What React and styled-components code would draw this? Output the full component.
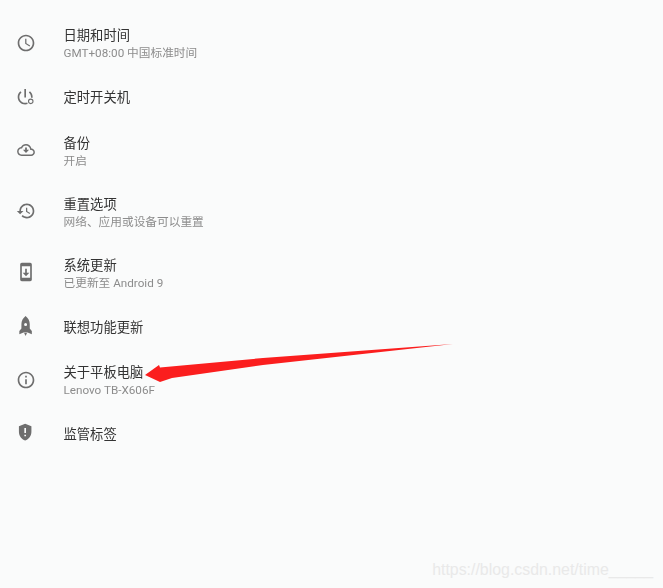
import React from "react";
import styled, { createGlobalStyle } from "styled-components";

const Global = createGlobalStyle`
  html, body {
    margin: 0;
    padding: 0;
    background: #fafbfb;
  }
`;

const icons = {
  clock: {
    paths: [
      "M11.99 2C6.47 2 2 6.48 2 12s4.47 10 9.99 10C17.52 22 22 17.52 22 12S17.52 2 11.99 2zM12 20c-4.42 0-8-3.58-8-8s3.58-8 8-8 8 3.58 8 8-3.58 8-8 8z",
      "M12.5 7H11v6l5.25 3.15.75-1.23-4.5-2.67z",
    ],
  },
  power: {
    paths: [
      "M10 2.5h2v10h-2z",
      "M5.2 5.2l1.4 1.4C5 7.9 4 9.8 4 12c0 3.9 3.1 7 7 7 .9 0 1.6-.1 2.4-.4l.7 1.9c-1 .3-2 .5-3.1.5-5 0-9-4-9-9 0-2.7 1.2-5.2 3.2-6.8z",
      "M16.8 5.2C18.800 6.800 20 9.300 20 12v1h-2v-1c0-2.200-1-4.100-2.600-5.400z",
    ],
    ring: true,
  },
  backup: {
    box: "-1.5 -1.5 27 27",
    paths: [
      "M19.35 10.04C18.67 6.59 15.64 4 12 4 9.11 4 6.6 5.64 5.35 8.04 2.34 8.36 0 10.91 0 14c0 3.31 2.69 6 6 6h13c2.76 0 5-2.24 5-5 0-2.64-2.05-4.78-4.65-4.96zM19 18H6c-2.21 0-4-1.79-4-4 0-2.05 1.53-3.76 3.56-3.97l1.07-.11.5-.95C8.08 7.14 9.94 6 12 6c2.62 0 4.88 1.86 5.39 4.43l.3 1.5 1.53.11c1.56.1 2.78 1.41 2.78 2.96 0 1.65-1.35 3-3 3z",
      "M13.2 8.500h-2.400v3.300H7.800l4.200 4.200 4.200-4.200h-3z",
    ],
  },
  history: {
    paths: [
      "M13 3c-4.97 0-9 4.03-9 9H1l3.89 3.89.07.14L9 12H6c0-3.87 3.13-7 7-7s7 3.13 7 7-3.13 7-7 7c-1.93 0-3.68-.79-4.94-2.06l-1.42 1.42C8.27 19.99 10.51 21 13 21c4.97 0 9-4.03 9-9s-4.03-9-9-9zm-1 5v5l4.28 2.54.72-1.21-3.5-2.08V8H12z",
    ],
  },
  update: {
    paths: [
      "M17 1.01L7 1c-1.1 0-2 .9-2 2v18c0 1.1.9 2 2 2h10c1.1 0 2-.9 2-2V3c0-1.1-.9-1.99-2-1.99zM17 19H7V5h10v14zm-1-6h-3V8h-2v5H8l4 4 4-4z",
    ],
  },
  rocket: {
    paths: [
      "M11.500 0C8.500 2.500 6.500 5.800 6.500 9.500v5.500l-2.500 3V22l5-2.300h5l5 2.300v-4l-2.500-3V9.500c0-3.700-2-7-5-9.500zm0 8.500a1.800 1.800 0 1 1 0 3.600 1.800 1.800 0 0 1 0-3.600z",
      "M9.800 20.500h3.400L11.500 24z",
    ],
  },
  info: {
    paths: [
      "M11 7h2v2h-2zm0 4h2v6h-2zm1-9C6.48 2 2 6.48 2 12s4.48 10 10 10 10-4.48 10-10S17.52 2 12 2zm0 18c-4.41 0-8-3.59-8-8s3.59-8 8-8 8 3.59 8 8-3.59 8-8 8z",
    ],
  },
  shield: {
    box: "1 1 24 24",
    paths: [
      "M12 2L4.500 5v6.500c0 4.800 3.200 9 7.500 10.500 4.300-1.500 7.500-5.700 7.500-10.500V5zM13 17h-2v-2h2zm0-4h-2V7h2z",
    ],
  },
};

const items = [
  { icon: "clock", title: "日期和时间", sub: "GMT+08:00 中国标准时间" },
  { icon: "power", title: "定时开关机" },
  { icon: "backup", title: "备份", sub: "开启" },
  { icon: "history", title: "重置选项", sub: "网络、应用或设备可以重置" },
  { icon: "update", title: "系统更新", sub: "已更新至 Android 9" },
  { icon: "rocket", title: "联想功能更新" },
  { icon: "info", title: "关于平板电脑", sub: "Lenovo TB-X606F" },
  { icon: "shield", title: "监管标签" },
];

const Icon = ({ name }) => {
  const { box, paths, ring } = icons[name];
  return (
    <Glyph viewBox={box || "0 0 24 24"}>
      {paths.map((d) => (
        <path key={d} d={d} />
      ))}
      {ring && <circle cx="17.700" cy="17.200" r="2.700" fill="none" stroke="#6e6e6e" strokeWidth="1.300" />}
    </Glyph>
  );
};

const App = () => {
  return (
    <Page>
      <Global />
      <List>
        {items.map((item) => (
          <Row key={item.title} $tall={!!item.sub}>
            <Icon name={item.icon} />
            <Texts>
              <Title>{item.title}</Title>
              {item.sub && <Sub>{item.sub}</Sub>}
            </Texts>
          </Row>
        ))}
      </List>
      <Arrow viewBox="0 0 663 588">
        <polygon points="145,375 159,365 160,367.500 263,358 453,344 263,365 172,378 160,382" />
      </Arrow>
      <Watermark>https://blog.csdn.net/time_____</Watermark>
    </Page>
  );
};

const Page = styled.div`
  position: relative;
  width: 663px;
  height: 588px;
  overflow: hidden;
  background: #fafbfb;
  font-family: "Roboto", "Noto Sans CJK SC", sans-serif;
`;

const List = styled.div`
  display: flex;
  flex-direction: column;
  padding-top: 12.500px;
  filter: blur(0.35px);
`;

const Row = styled.div`
  display: flex;
  align-items: center;
  gap: 28px;
  height: ${(props) => (props.$tall ? "61px" : "46.300px")};
  padding-left: 16px;
`;

const Glyph = styled.svg`
  width: 20px;
  height: 20px;
  flex: none;
  fill: #6e6e6e;
  fill-rule: evenodd;
`;

const Texts = styled.div`
  display: flex;
  flex-direction: column;
  padding-top: 3.500px;
  margin-left: -0.500px;
`;

const Title = styled.div`
  font-size: 13.300px;
  line-height: 18px;
  color: #333333;
`;

const Sub = styled.div`
  font-size: 11.700px;
  line-height: 17px;
  color: #8c8c8c;
`;

const Arrow = styled.svg`
  position: absolute;
  top: 0;
  left: 0;
  width: 663px;
  height: 588px;
  fill: #fb1e1e;
`;

const Watermark = styled.div`
  position: absolute;
  right: 10px;
  top: 560px;
  font-family: "Liberation Sans", sans-serif;
  font-size: 15.900px;
  line-height: 20px;
  color: #e9e9e9;
`;

export default App;
